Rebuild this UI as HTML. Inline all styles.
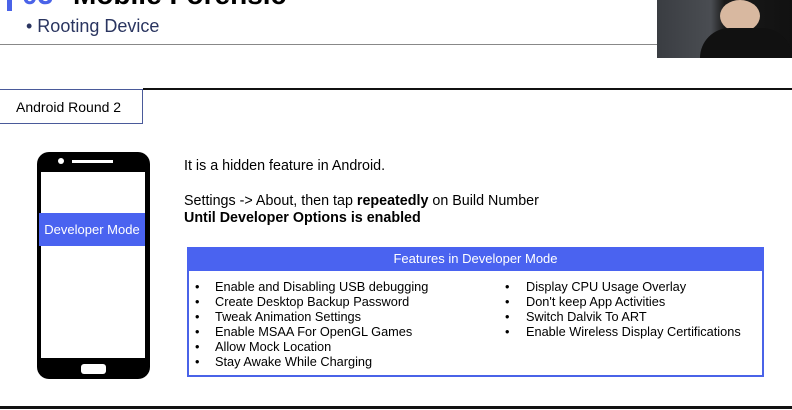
<!DOCTYPE html>
<html><head><style>
*{margin:0;padding:0;box-sizing:border-box}
body{width:792px;height:410px;overflow:hidden;background:#fff;font-family:"Liberation Sans",Arial,sans-serif;position:relative;color:#000}
.a{position:absolute}
.t{font-size:12.75px;line-height:15px;white-space:nowrap}
</style></head><body>
<div class="a" style="left:7px;top:-12px;width:5px;height:23px;background:#4a63e8"></div>
<div class="a" style="left:22px;top:-19px;font-size:28px;font-weight:bold;color:#4a63e8;line-height:28px">03</div>
<div class="a" style="left:73px;top:-19px;font-size:28px;font-weight:bold;line-height:28px">Mobile Forensic</div>
<div class="a" style="left:26px;top:15px;font-size:18px;line-height:22px;color:#2a3560">• Rooting Device</div>
<div class="a" style="left:0;top:44px;width:657px;height:1px;background:#888"></div>
<div class="a" style="left:657px;top:0;width:135px;height:58px;background:linear-gradient(90deg,#3a3d42 0,#4a4d52 40%,#1a1a1a 50%,#111 100%)"></div>
<div class="a" style="left:720px;top:0;width:40px;height:32px;border-radius:50%;background:#d8b8a0"></div>
<div class="a" style="left:700px;top:28px;width:92px;height:30px;border-radius:30px 30px 0 0;background:#111"></div>
<div class="a" style="left:143px;top:88px;width:649px;height:2px;background:#111"></div>
<div class="a" style="left:-2px;top:89px;width:145px;height:35px;border:1px solid #4a5a9a"></div>
<div class="a" style="left:16px;top:99px;font-size:14px">Android Round 2</div>
<div class="a" style="left:37px;top:152px;width:113px;height:227px;background:#000;border-radius:12px"></div>
<div class="a" style="left:41px;top:172px;width:104px;height:186px;background:#fff"></div>
<div class="a" style="left:58px;top:158px;width:6px;height:6px;border-radius:50%;background:#fff"></div>
<div class="a" style="left:72px;top:160px;width:41px;height:3px;background:#fff"></div>
<div class="a" style="left:81px;top:364px;width:25px;height:10px;border-radius:3px;background:#fff"></div>
<div class="a" style="left:39px;top:213px;width:106px;height:33px;background:#4a63f0;color:#fff;font-size:13px;line-height:33px;text-align:center">Developer Mode</div>
<div class="a" style="left:184px;top:158px;font-size:14.3px;line-height:17px">It is a hidden feature in Android.</div>
<div class="a" style="left:184px;top:193px;font-size:14.3px;line-height:17px;white-space:nowrap">Settings -&gt; About, then tap <b>repeatedly</b> on Build Number<br><b>Until Developer Options is enabled</b></div>
<div class="a" style="left:187px;top:247px;width:577px;height:130px;border:2px solid #4a63e8;border-top:none"></div>
<div class="a" style="left:187px;top:247px;width:577px;height:24px;background:#4a63f0;color:#fff;font-size:13px;line-height:24px;text-align:center">Features in Developer Mode</div>
<div class="a t" style="left:195px;top:279px">•<br>•<br>•<br>•<br>•<br>•</div>
<div class="a t" style="left:215px;top:279px">Enable and Disabling USB debugging<br>Create Desktop Backup Password<br>Tweak Animation Settings<br>Enable MSAA For OpenGL Games<br>Allow Mock Location<br>Stay Awake While Charging</div>
<div class="a t" style="left:505px;top:279px">•<br>•<br>•<br>•</div>
<div class="a t" style="left:526px;top:279px">Display CPU Usage Overlay<br>Don't keep App Activities<br>Switch Dalvik To ART<br>Enable Wireless Display Certifications</div>
<div class="a" style="left:0;top:406px;width:792px;height:3px;background:#111"></div>
</body></html>
